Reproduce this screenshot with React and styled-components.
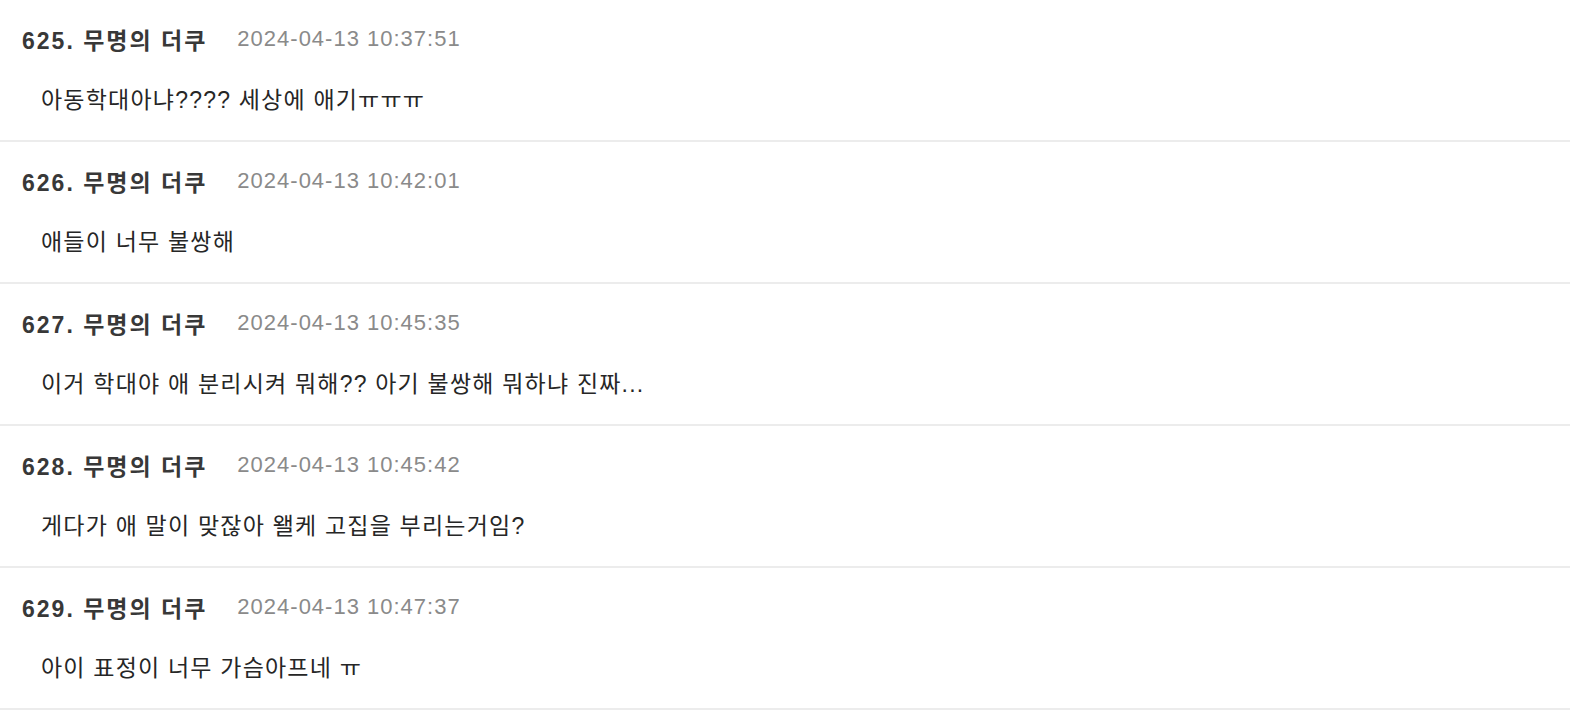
import styled, { createGlobalStyle } from 'styled-components'

const comments = [
	{ no: 625, name: '무명의 더쿠', date: '2024-04-13 10:37:51', text: '아동학대아냐???? 세상에 애기ㅠㅠㅠ' },
	{ no: 626, name: '무명의 더쿠', date: '2024-04-13 10:42:01', text: '애들이 너무 불쌍해' },
	{ no: 627, name: '무명의 더쿠', date: '2024-04-13 10:45:35', text: '이거 학대야 애 분리시켜 뭐해?? 아기 불쌍해 뭐하냐 진짜...' },
	{ no: 628, name: '무명의 더쿠', date: '2024-04-13 10:45:42', text: '게다가 애 말이 맞잖아 왤케 고집을 부리는거임?' },
	{ no: 629, name: '무명의 더쿠', date: '2024-04-13 10:47:37', text: '아이 표정이 너무 가슴아프네 ㅠ' },
]

const GlobalStyle = createGlobalStyle`
	body {
		margin: 0;
		background: #fff;
		font-family: 'Liberation Sans', 'Noto Sans CJK KR', sans-serif;
	}
`

const CommentList = () => {
	return (
		<List>
			{comments.map((c) => (
				<Item key={c.no}>
					<Header>
						<Author>
							{c.no}. {c.name}
						</Author>
						<Date>{c.date}</Date>
					</Header>
					<Body>{c.text}</Body>
				</Item>
			))}
		</List>
	)
}

const List = styled.ul`
	list-style: none;
	margin: 0;
	padding: 0;
`
const Item = styled.li`
	box-sizing: border-box;
	height: 142px;
	padding: 21px 22px 0;
	border-bottom: 2px solid #ececec;
`
const Header = styled.div`
	display: flex;
	align-items: center;
	gap: 30px;
	height: 36px;
`
const Author = styled.span`
	font-size: 23px;
	font-weight: 700;
	letter-spacing: 2px;
	color: #383838;
`
const Date = styled.span`
	font-size: 22px;
	letter-spacing: 1px;
	color: #8a8a8a;
`
const Body = styled.p`
	margin: 25px 0 0 19px;
	line-height: 36px;
	font-size: 23px;
	letter-spacing: 1.2px;
	color: #262626;
`

const App = () => (
	<>
		<GlobalStyle />
		<CommentList />
	</>
)

export default App
